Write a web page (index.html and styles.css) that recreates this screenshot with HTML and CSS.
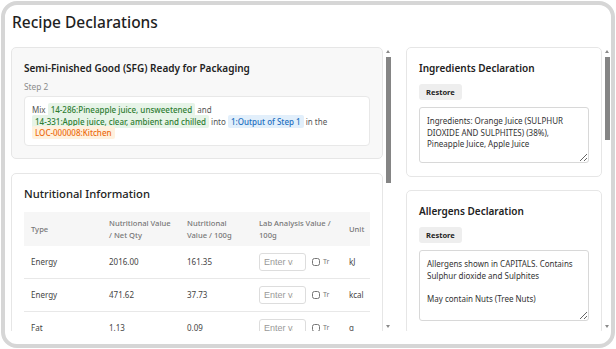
FILE: index.html
```html
<!DOCTYPE html>
<html lang="en">

<head>
    <meta charset="UTF-8">
    <meta name="viewport" content="width=device-width, initial-scale=1.0">
    <title>Recipe Declarations</title>
    <link rel="stylesheet" href="styles.css">
</head>

<body>
    <div class="frame">
        <h1>Recipe Declarations</h1>
        <div class="columns">
            <!-- Coluna da receita -->
            <div class="panel panel-left">
                <div class="panel-body">
                    <div class="card card-step">
                        <h2>Semi-Finished Good (SFG) Ready for Packaging</h2>
                        <div class="step-label">Step 2</div>
                        <div class="step-text">
                            Mix <span class="chip chip-green">14-286:Pineapple juice, unsweetened</span> and
                            <span class="chip chip-green">14-331:Apple juice, clear, ambient and chilled</span> into
                            <span class="chip chip-blue">1:Output of Step 1</span> in the
                            <span class="chip chip-orange">LOC-000008:Kitchen</span>
                        </div>
                    </div>

                    <div class="card">
                        <h2 class="big">Nutritional Information</h2>
                        <table class="nutri">
                            <colgroup>
                                <col class="c-type">
                                <col class="c-net">
                                <col class="c-100">
                                <col class="c-lab">
                                <col>
                            </colgroup>
                            <thead>
                                <tr>
                                    <th>Type</th>
                                    <th>Nutritional Value / Net Qty</th>
                                    <th>Nutritional Value / 100g</th>
                                    <th>Lab Analysis Value / 100g</th>
                                    <th>Unit</th>
                                </tr>
                            </thead>
                            <tbody id="rows"></tbody>
                        </table>
                    </div>
                </div>
                <div class="scrollbar">
                    <span class="arrow arrow-up"></span>
                    <div class="track"><div class="thumb thumb-left"></div></div>
                    <span class="arrow arrow-down"></span>
                </div>
            </div>

            <!-- Coluna das declarações -->
            <div class="panel panel-right">
                <div class="panel-body">
                    <div class="card">
                        <h2>Ingredients Declaration</h2>
                        <button class="restore">Restore</button>
                        <textarea class="decl">Ingredients: Orange Juice (SULPHUR DIOXIDE AND SULPHITES) (38%), Pineapple Juice, Apple Juice</textarea>
                    </div>
                    <div class="card">
                        <h2>Allergens Declaration</h2>
                        <button class="restore">Restore</button>
                        <textarea class="decl tall">Allergens shown in CAPITALS. Contains Sulphur dioxide and Sulphites

May contain Nuts (Tree Nuts)</textarea>
                    </div>
                    <div class="card">
                        <h2>Storage Declaration</h2>
                        <button class="restore">Restore</button>
                        <textarea class="decl tall">Keep refrigerated. Once opened consume within 3 days.</textarea>
                    </div>
                </div>
                <div class="scrollbar">
                    <span class="arrow arrow-up"></span>
                    <div class="track"><div class="thumb thumb-right"></div></div>
                    <span class="arrow arrow-down"></span>
                </div>
            </div>
        </div>
    </div>

    <script>
        const nutrientes = [
            ["Energy", "2016.00", "161.35", "kJ"],
            ["Energy", "471.62", "37.73", "kcal"],
            ["Fat", "1.13", "0.09", "g"],
            ["Saturates", "0.25", "0.02", "g"],
            ["Carbohydrate", "112.46", "9.00", "g"],
            ["Sugars", "104.96", "8.40", "g"],
            ["Protein", "6.25", "0.50", "g"],
            ["Salt", "0.12", "0.01", "g"]
        ];

        const tbody = document.getElementById("rows");
        nutrientes.forEach(n => {
            const tr = document.createElement("tr");
            tr.innerHTML =
                "<td>" + n[0] + "</td>" +
                "<td>" + n[1] + "</td>" +
                "<td>" + n[2] + "</td>" +
                "<td><div class=\"lab\"><input type=\"text\" placeholder=\"Enter value\">" +
                "<label class=\"trace\"><input type=\"checkbox\"><span>Tr</span></label></div></td>" +
                "<td>" + n[3] + "</td>";
            tbody.appendChild(tr);
        });
    </script>
</body>

</html>
```

FILE: styles.css
```css
html,
body {
    margin: 0;
    height: 100%;
    background-color: #fff;
}

body {
    font-family: "Noto Sans", "Open Sans", sans-serif;
    color: #333;
}

.frame {
    box-sizing: border-box;
    margin: 1px;
    height: 347px;
    border: 4px solid #d6d6d6;
    border-radius: 16px;
    padding: 4px 0 13px 6px;
    display: flex;
    flex-direction: column;
}

h1 {
    margin: 0 0 0 1px;
    height: 38px;
    line-height: 27px;
    font-size: 15.5px;
    font-weight: 500;
    color: #1f1f1f;
}

.columns {
    flex: 1;
    display: flex;
    gap: 14px;
    min-height: 0;
}

.panel {
    display: flex;
    gap: 1px;
    min-height: 0;
}

.panel-left {
    width: 381px;
}

.panel-right {
    flex: 1;
}

.panel-body {
    flex: 1;
    min-width: 0;
    overflow: hidden;
    display: flex;
    flex-direction: column;
    gap: 14px;
}

.panel-right .panel-body {
    gap: 13px;
}

/* barra de rolagem desenhada */
.scrollbar {
    width: 8px;
    display: flex;
    flex-direction: column;
    align-items: center;
}

.track {
    flex: 1;
    width: 100%;
    display: flex;
    justify-content: center;
}

.thumb {
    width: 5px;
    background-color: #858585;
}

.thumb-left {
    height: 126px;
}

.thumb-right {
    height: 83px;
}

.arrow {
    width: 0;
    height: 0;
    border-left: 2.5px solid transparent;
    border-right: 2.5px solid transparent;
}

.arrow-up {
    margin: 3px 0 4px;
    border-bottom: 3px solid #8a8a8a;
}

.arrow-down {
    margin: 4px 0 3px;
    border-top: 3px solid #8a8a8a;
}

.card {
    flex-shrink: 0;
    background-color: #fff;
    border: 1px solid #e6e6e6;
    border-radius: 5px;
    padding: 12px 12px 13px;
}

.card-step {
    background-color: #f8f8f8;
    padding-bottom: 12px;
}

h2 {
    margin: 0;
    font-size: 10px;
    line-height: 16px;
    font-weight: 600;
    color: #222;
}

h2.big {
    font-size: 11.2px;
    font-weight: 500;
}

.step-label {
    margin-top: 5px;
    font-size: 8.3px;
    line-height: 12px;
    color: #8c8c8c;
}

.step-text {
    margin-top: 3px;
    background-color: #fff;
    border: 1px solid #e8e8e8;
    border-radius: 4px;
    padding: 7px 7px 6px;
    font-size: 8px;
    line-height: 11.5px;
    color: #555;
}

.chip {
    white-space: nowrap;
    padding: 1px 3px;
    border-radius: 2px;
    font-weight: 500;
}

.chip-green {
    background-color: #e7f4e8;
    color: #2e7d32;
}

.chip-blue {
    background-color: #e2effb;
    color: #1e6fc0;
}

.chip-orange {
    background-color: #fff1de;
    color: #ec6a0c;
}

.nutri {
    margin-top: 10px;
    width: 100%;
    border-collapse: collapse;
    table-layout: fixed;
    font-size: 8px;
}

.c-type,
.c-net {
    width: 78px;
}

.c-100 {
    width: 72px;
}

.c-lab {
    width: 90px;
}

.nutri th {
    background-color: #f6f6f6;
    color: #777;
    font-size: 7.6px;
    font-weight: 500;
    text-align: left;
    padding: 0 7px;
    height: 34px;
    line-height: 12px;
}

.nutri td {
    padding: 0 7px;
    height: 32px;
    color: #444;
    border-bottom: 1px solid #e8e8e8;
    white-space: nowrap;
}

.lab {
    display: flex;
    align-items: center;
    gap: 6px;
}

.lab input[type="text"] {
    box-sizing: border-box;
    width: 47px;
    height: 18px;
    padding: 0 12px 0 4px;
    border: 1px solid #ddd;
    border-radius: 3px;
    font-family: "Liberation Sans", Arial, sans-serif;
    font-size: 9px;
}

.lab input::placeholder {
    color: #999;
}

.trace {
    display: flex;
    align-items: center;
    gap: 3px;
    color: #777;
    font-size: 7px;
}

.trace input {
    margin: 0;
    width: 8px;
    height: 8px;
}

.restore {
    display: block;
    margin-top: 8px;
    height: 16px;
    padding: 0 7px;
    border: none;
    border-radius: 3px;
    background-color: #eee;
    font-family: inherit;
    font-size: 7.5px;
    font-weight: 700;
    color: #222;
}

.decl {
    display: block;
    box-sizing: border-box;
    margin-top: 7px;
    width: 100%;
    height: 56px;
    padding: 7px 7px;
    border: 1px solid #d8d8d8;
    border-radius: 3px;
    font-family: inherit;
    font-size: 8px;
    line-height: 11.5px;
    color: #333;
    resize: vertical;
}

.decl.tall {
    height: 71px;
}
```
